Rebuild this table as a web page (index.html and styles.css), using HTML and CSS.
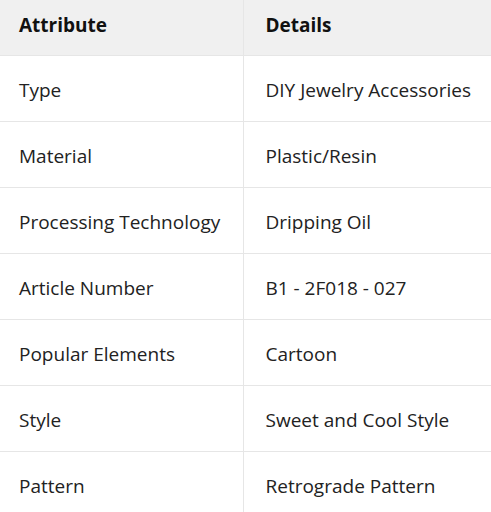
FILE: index.html
```html
<!DOCTYPE html>
<html lang="en">
<head>
<meta charset="utf-8">
<title>Attributes</title>
<link rel="stylesheet" href="styles.css">
</head>
<body>
<table class="spec">
  <colgroup><col class="c1"><col class="c2"></colgroup>
  <thead>
    <tr><th>Attribute</th><th>Details</th></tr>
  </thead>
  <tbody>
    <tr><td>Type</td><td>DIY Jewelry Accessories</td></tr>
    <tr><td>Material</td><td>Plastic/Resin</td></tr>
    <tr><td>Processing Technology</td><td>Dripping Oil</td></tr>
    <tr><td>Article Number</td><td>B1 - 2F018 - 027</td></tr>
    <tr><td>Popular Elements</td><td>Cartoon</td></tr>
    <tr><td>Style</td><td>Sweet and Cool Style</td></tr>
    <tr><td>Pattern</td><td>Retrograde Pattern</td></tr>
  </tbody>
</table>
</body>
</html>
```
FILE: styles.css
```css
html, body {
  margin: 0;
  padding: 0;
  background: #ffffff;
  overflow: hidden;
}
.spec {
  border-collapse: collapse;
  table-layout: fixed;
  width: 491px;
  font-family: "Open Sans", "Noto Sans", sans-serif;
  font-size: 19px;
  color: #222222;
}
.spec .c1 { width: 243px; }
.spec .c2 { width: 248px; }
.spec th, .spec td {
  text-align: left;
  padding: 0 0 0 19px;
  border-left: 1px solid #e6e6e6;
  border-bottom: 1px solid #e6e6e6;
  white-space: nowrap;
  overflow: visible;
}
.spec th:first-child, .spec td:first-child {
  border-left: none;
}
.spec th {
  height: 55px;
  background: #f0f0f0;
  font-weight: 700;
  color: #111111;
  padding-bottom: 4px;
  box-sizing: border-box;
}
.spec td {
  height: 66px;
  padding-top: 4px;
  box-sizing: border-box;
}
.spec td:nth-child(2), .spec th:nth-child(2) {
  padding-left: 22px;
}
```
